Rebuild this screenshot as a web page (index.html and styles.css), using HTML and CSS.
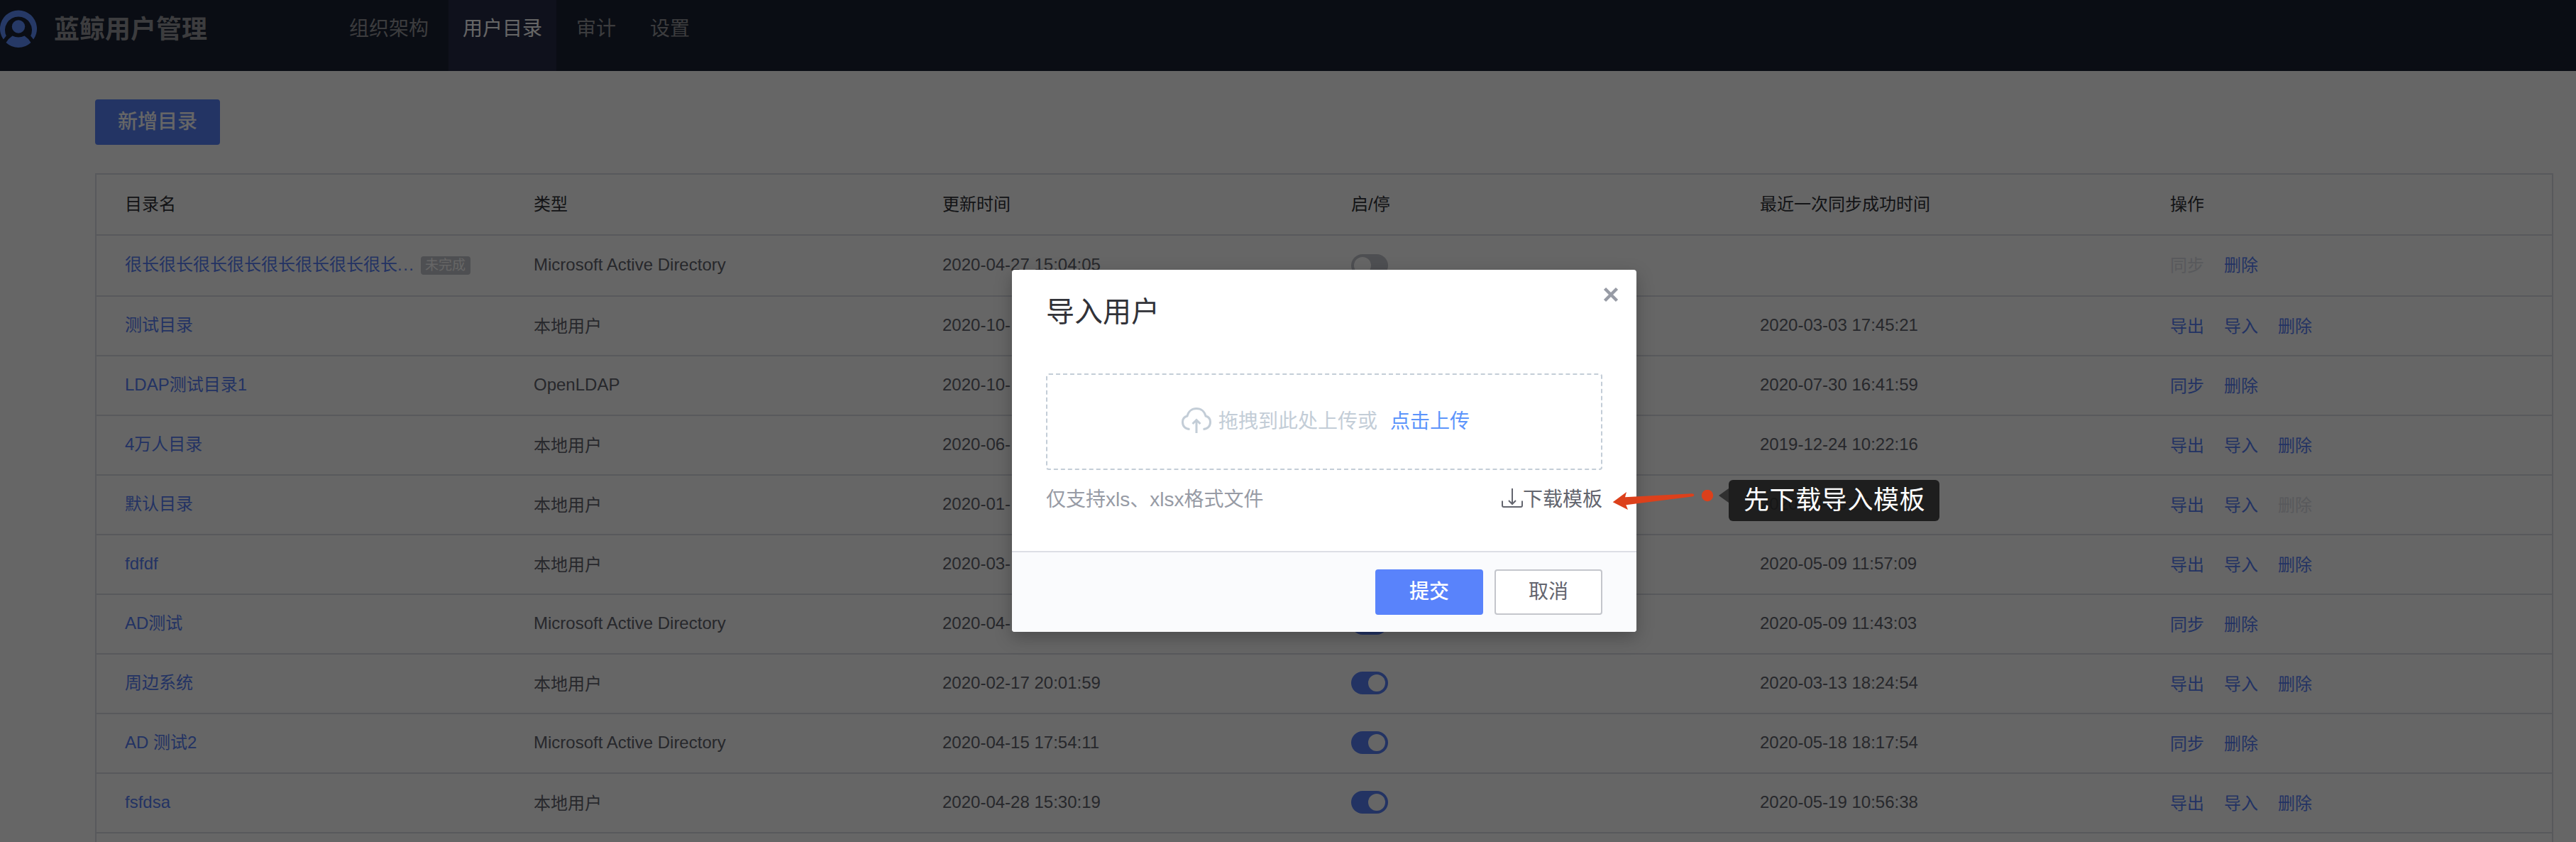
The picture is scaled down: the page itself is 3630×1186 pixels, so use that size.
FILE: index.html
```html
<!DOCTYPE html>
<html lang="zh-CN">
<head>
<meta charset="utf-8">
<title>蓝鲸用户管理</title>
<link rel="stylesheet" href="styles.css">
</head>
<body>
<header class="topbar">
  <svg class="logo" viewBox="0 0 52 54" width="52" height="54" aria-hidden="true">
    <path d="M4.8 41.500A26 26 0 1 1 47.200 41.500L43.200 36.500A19 19 0 1 0 8.800 36.500Z"/>
    <circle cx="26" cy="23.500" r="9.200"/>
    <path d="M17.500 36.500Q26 40.500 34.500 36.500Q40 40 43.500 46Q36 53 26 53Q16 53 8.500 46Q12 40 17.500 36.500Z"/>
  </svg>
  <h1 class="brand">蓝鲸用户管理</h1>
  <nav class="nav">
    <a class="tab">组织架构</a>
    <a class="tab active">用户目录</a>
    <a class="tab">审计</a>
    <a class="tab">设置</a>
  </nav>
</header>
<main class="content">
  <button class="btn primary add">新增目录</button>
  <section class="table">
    <div class="row head"><span>目录名</span><span>类型</span><span>更新时间</span><span>启/停</span><span>最近一次同步成功时间</span><span class="action-head">操作</span></div>
    <div class="row first"><span class="name">很长很长很长很长很长很长很长很长<b class="dots">...</b><em class="tag">未完成</em></span><span class="latin">Microsoft Active Directory</span><span class="latin">2020-04-27 15:04:05</span><span><i class="switch off"></i></span><span></span><span class="ops"><a class="disabled">同步</a><a>删除</a></span></div>
    <div class="row"><span class="name">测试目录</span><span class="cjk">本地用户</span><span class="latin">2020-10-</span><span><i class="switch"></i></span><span class="latin">2020-03-03 17:45:21</span><span class="ops"><a>导出</a><a>导入</a><a>删除</a></span></div>
    <div class="row"><span class="name">LDAP测试目录1</span><span class="latin">OpenLDAP</span><span class="latin">2020-10-</span><span><i class="switch"></i></span><span class="latin">2020-07-30 16:41:59</span><span class="ops"><a>同步</a><a>删除</a></span></div>
    <div class="row"><span class="name">4万人目录</span><span class="cjk">本地用户</span><span class="latin">2020-06-</span><span><i class="switch"></i></span><span class="latin">2019-12-24 10:22:16</span><span class="ops"><a>导出</a><a>导入</a><a>删除</a></span></div>
    <div class="row"><span class="name">默认目录</span><span class="cjk">本地用户</span><span class="latin">2020-01-</span><span><i class="switch"></i></span><span class="latin">2020-03-26 20:22:27</span><span class="ops"><a>导出</a><a>导入</a><a class="disabled">删除</a></span></div>
    <div class="row"><span class="name">fdfdf</span><span class="cjk">本地用户</span><span class="latin">2020-03-</span><span><i class="switch"></i></span><span class="latin">2020-05-09 11:57:09</span><span class="ops"><a>导出</a><a>导入</a><a>删除</a></span></div>
    <div class="row"><span class="name">AD测试</span><span class="latin">Microsoft Active Directory</span><span class="latin">2020-04-</span><span><i class="switch"></i></span><span class="latin">2020-05-09 11:43:03</span><span class="ops"><a>同步</a><a>删除</a></span></div>
    <div class="row"><span class="name">周边系统</span><span class="cjk">本地用户</span><span class="latin">2020-02-17 20:01:59</span><span><i class="switch"></i></span><span class="latin">2020-03-13 18:24:54</span><span class="ops"><a>导出</a><a>导入</a><a>删除</a></span></div>
    <div class="row"><span class="name">AD 测试2</span><span class="latin">Microsoft Active Directory</span><span class="latin">2020-04-15 17:54:11</span><span><i class="switch"></i></span><span class="latin">2020-05-18 18:17:54</span><span class="ops"><a>同步</a><a>删除</a></span></div>
    <div class="row"><span class="name">fsfdsa</span><span class="cjk">本地用户</span><span class="latin">2020-04-28 15:30:19</span><span><i class="switch"></i></span><span class="latin">2020-05-19 10:56:38</span><span class="ops"><a>导出</a><a>导入</a><a>删除</a></span></div>
  </section>
</main>

<div class="mask"></div>
<section class="dialog">
  <svg class="close" viewBox="0 0 22 22" width="22" height="22" aria-hidden="true"><path d="M2.500 2.500L19.500 19.500M19.500 2.500L2.500 19.500"/></svg>
  <h2 class="dialog-title">导入用户</h2>
  <div class="dropzone">
    <svg class="cloud" viewBox="0 0 44 38" width="44" height="38" aria-hidden="true">
      <path d="M12.500 31.500C6 31.500 2.500 27 2.500 21.500C2.500 17 5 14 9 13C10.500 6.500 15.500 2.500 22 2.500S33.500 6.500 35 13C39 14 41.500 17 41.500 21.500C41.500 27 38 31.500 31.500 31.500"/>
      <path d="M22 37V19M16.500 24L22 18.500L27.500 24"/>
    </svg>
    <span class="drop-text">拖拽到此处上传或</span>
    <a class="pick">点击上传</a>
  </div>
  <div class="hint">
    <span>仅支持xls、xlsx格式文件</span>
    <a class="download">
      <svg viewBox="0 0 30 28" width="30" height="28" aria-hidden="true"><path d="M1 17.500V24Q1 26 3 26H27Q29 26 29 24V17.500M15 0V21.500M10 17L15 22L20 17"/></svg>下载模板</a>
  </div>
  <footer class="dialog-foot">
    <button class="btn primary">提交</button>
    <button class="btn">取消</button>
  </footer>
</section>

<svg class="arrow" viewBox="0 0 146 30" width="146" height="30" aria-hidden="true">
  <path d="M0.700 17.300L20 3L18 10.300L112 5.300Q115.300 5.300 115.300 7.300Q115.300 9 112 9.600L19.300 21.300L22 28Z"/>
  <circle cx="134" cy="8" r="8.200"/>
</svg>
<div class="note">先下载导入模板</div>
</body>
</html>
```
FILE: styles.css
```css
* { box-sizing: border-box; }

body {
  margin: 0;
  height: 1186px;
  overflow: hidden;
  position: relative;
  background: #fff;
  color: #63656e;
  font: 24px/36px "Liberation Sans", "Noto Sans CJK SC", sans-serif;
}

.topbar {
  display: flex;
  height: 100px;
  background: #192132;
  color: #96979c;
}
.logo { margin-top: 14px; fill: #6090ff; }
.brand {
  width: 396px;
  margin: 0 0 0 24px;
  font-size: 36px;
  font-weight: 700;
  line-height: 84px;
}
.nav { display: flex; gap: 8px; }
.tab {
  padding: 0 20px;
  font-size: 28px;
  line-height: 81px;
}
.tab.active { background: #272b46; color: #fff; }

.content {
  display: flex;
  flex-direction: column;
  height: 1086px;
  padding: 40px 32px 0 134px;
}

.btn {
  display: block;
  width: 152px;
  height: 64px;
  padding: 0;
  border: 2px solid #c4c6cc;
  border-radius: 4px;
  background: #fff;
  color: #63656e;
  font: 28px/60px "Liberation Sans", "Noto Sans CJK SC", sans-serif;
}
.btn.primary {
  border-color: #5983fb;
  background: #5983fb;
  color: #fff;
  font-weight: 500;
}
.btn.add { flex: none; width: 176px; }

.table {
  flex: 1;
  margin-top: 40px;
  border: 2px solid #dcdee5;
  border-bottom: 0;
}
.row {
  display: grid;
  grid-template-columns: repeat(6, 576px);
  align-items: center;
  height: 84px;
  border-bottom: 2px solid #dcdee5;
}
.row > span {
  display: flex;
  align-items: center;
  padding-left: 40px;
  white-space: nowrap;
}
.row.head, .row.first { height: 86px; }
.row.head { color: #313238; }
.row .name { color: #5880f8; padding-bottom: 2px; }
.row .latin { padding-bottom: 2px; }
.row .cjk, .row .ops { padding-top: 2px; }
.row.first .ops { padding-top: 0; }
.row .ops { gap: 28px; color: #5880f8; }
.row .ops, .row .action-head { padding-left: 42px; }
.ops .disabled { color: #dcdee5; }
.dots { font-weight: 400; letter-spacing: 1.5px; }
.tag {
  width: 70px;
  height: 26px;
  margin: 2px 0 0 8px;
  border-radius: 4px;
  background: #c4c6cc;
  color: #fff;
  font-size: 19px;
  font-style: normal;
  line-height: 26px;
  text-align: center;
}
.switch {
  display: flex;
  justify-content: flex-end;
  width: 52px;
  height: 32px;
  margin-bottom: 2px;
  padding: 4px;
  border-radius: 16px;
  background: #5880f8;
}
.switch::after {
  content: "";
  width: 24px;
  border-radius: 50%;
  background: #fff;
}
.switch.off { justify-content: flex-start; margin-bottom: 0; background: #c4c6cc; }

.mask {
  position: absolute;
  inset: 0;
  background: rgba(0, 0, 0, .6);
}

.dialog {
  position: absolute;
  left: 1426px;
  top: 380px;
  display: flex;
  flex-direction: column;
  width: 880px;
  height: 510px;
  border-radius: 4px;
  background: #fff;
  box-shadow: 0 8px 24px rgba(0, 0, 0, .25);
}
.close {
  position: absolute;
  right: 25px;
  top: 24px;
  fill: none;
  stroke: #979ba5;
  stroke-width: 4.500;
}
.dialog-title {
  margin: 33px 48px 61px;
  color: #313238;
  font-size: 40px;
  font-weight: 400;
  line-height: 52px;
}
.dropzone {
  display: flex;
  align-items: center;
  justify-content: center;
  height: 136px;
  margin: 0 48px;
  padding-left: 3px;
  border: 2px dashed #c3cdd7;
  border-radius: 4px;
  color: #c3cdd7;
  font-size: 28px;
}
.cloud {
  margin: 0 9px 4px 0;
  fill: none;
  stroke: currentColor;
  stroke-width: 3;
}
.pick { margin-left: 18px; color: #5c94fb; }
.hint {
  display: flex;
  justify-content: space-between;
  margin: 22px 48px 0;
  color: #979ba5;
  font-size: 28px;
  line-height: 40px;
}
.download { display: flex; align-items: center; color: #63656e; }
.download svg {
  margin-bottom: 4px;
  fill: none;
  stroke: currentColor;
  stroke-width: 2;
}
.dialog-foot {
  display: flex;
  justify-content: flex-end;
  gap: 16px;
  height: 114px;
  margin-top: auto;
  padding: 24px 48px;
  border-top: 2px solid #dcdee5;
  border-radius: 0 0 4px 4px;
  background: #fafbfd;
}

.arrow {
  position: absolute;
  left: 2272px;
  top: 690px;
  fill: #dc401b;
}
.note {
  position: absolute;
  left: 2436px;
  top: 676px;
  width: 297px;
  height: 58px;
  padding-left: 21px;
  border-radius: 6px;
  background: rgba(20, 20, 20, .88);
  color: #fff;
  font-size: 36px;
  line-height: 57px;
  letter-spacing: .6px;
  white-space: nowrap;
}
.note::before {
  content: "";
  position: absolute;
  left: -14px;
  top: 12px;
  border: solid transparent;
  border-width: 10px 14px 10px 0;
  border-right-color: #303030;
}
```
